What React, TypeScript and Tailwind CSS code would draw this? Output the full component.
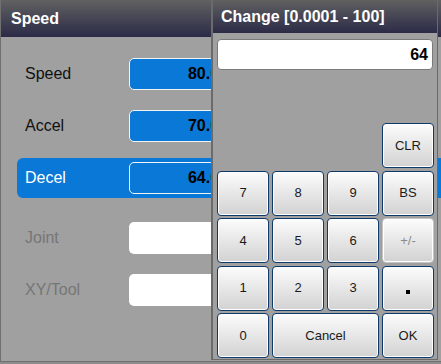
import React from "react";

const font = { fontFamily: '"Liberation Sans", Arial, sans-serif' };

type Row = { label: string; value?: string; active?: boolean; disabled?: boolean; mt: string };

const rows: Row[] = [
  { label: "Speed", value: "80.00", mt: "mt-[17px]" },
  { label: "Accel", value: "70.00", mt: "mt-[12px]" },
  { label: "Decel", value: "64.00", active: true, mt: "mt-[12px]" },
  { label: "Joint", disabled: true, mt: "mt-[20px]" },
  { label: "XY/Tool", disabled: true, mt: "mt-[12px]" },
];

function Key({ label, wide, disabled, dot }: { label: string; wide?: boolean; disabled?: boolean; dot?: boolean }) {
  return (
    <button
      className={`h-[45px] rounded-[4px] border bg-gradient-to-b from-[#fcfcfc] to-[#d2d2d2] text-[13px] shadow-[inset_0_0_0_1px_#ffffff] flex items-center justify-center ${
        wide ? "col-span-2" : ""
      } ${disabled ? "border-[#c4c4c4] text-[#8a8a8a]" : "border-[#0d3a6b] text-[#1a1a1a]"}`}
    >
      {dot ? <span className="block w-[4px] h-[4px] bg-black mt-[8px]" /> : label}
    </button>
  );
}

export default function App() {
  return (
    <div className="relative w-[441px] h-[364px] bg-[#8c8c8c] overflow-hidden" style={font}>
      {/* main panel */}
      <div className="w-[441px] h-[362px] bg-[#a0a0a0] border-l border-b border-[#707070] flex flex-col">
        <div className="h-[37px] shrink-0 bg-gradient-to-b from-[#616161] to-[#2c2b47] flex items-center pl-[10px]">
          <span className="text-white font-bold text-[16px]">Speed</span>
        </div>
        <div className="flex flex-col pl-[16px]">
          {rows.map((r) => (
            <div
              key={r.label}
              className={`${r.mt} h-[40px] flex items-center rounded-l-[6px] ${r.active ? "bg-[#0a78d6]" : ""}`}
            >
              <span
                className={`w-[112px] pl-[8px] text-[16px] ${
                  r.active ? "text-white" : r.disabled ? "text-[#767676]" : "text-[#111]"
                }`}
              >
                {r.label}
              </span>
              <div
                className={`w-[150px] h-[32px] rounded-[5px] flex items-center justify-end pr-[50px] font-bold text-[16px] ${
                  r.disabled ? "bg-white" : "bg-[#0a78d6] border border-[#f4f4f4] text-black"
                }`}
              >
                {r.value}
              </div>
            </div>
          ))}
        </div>
      </div>

      {/* change dialog */}
      <div className="absolute left-[211px] top-0 w-[227px] h-[360px] bg-[#a0a0a0] border-l-2 border-r border-b border-[#6a6a6a] flex flex-col">
        <div className="h-[33px] shrink-0 bg-gradient-to-b from-[#616161] to-[#2c2b47] flex items-center pl-[8px]">
          <span className="text-white font-bold text-[16px]">Change [0.0001 - 100]</span>
        </div>
        <div className="mx-[4px] mt-[6px] h-[31px] bg-white border border-[#7a7a7a] rounded-[4px] flex items-center justify-end pr-[4px] font-bold text-[16px] text-black">
          64
        </div>
        <div className="mx-[4px] mt-[53px] grid grid-cols-[52px_52px_52px_52px] gap-x-[3px] gap-y-[2.5px]">
          <div className="col-span-3" />
          <Key label="CLR" />
          <Key label="7" />
          <Key label="8" />
          <Key label="9" />
          <Key label="BS" />
          <Key label="4" />
          <Key label="5" />
          <Key label="6" />
          <Key label="+/-" disabled />
          <Key label="1" />
          <Key label="2" />
          <Key label="3" />
          <Key label="." dot />
          <Key label="0" />
          <Key label="Cancel" wide />
          <Key label="OK" />
        </div>
      </div>
    </div>
  );
}
